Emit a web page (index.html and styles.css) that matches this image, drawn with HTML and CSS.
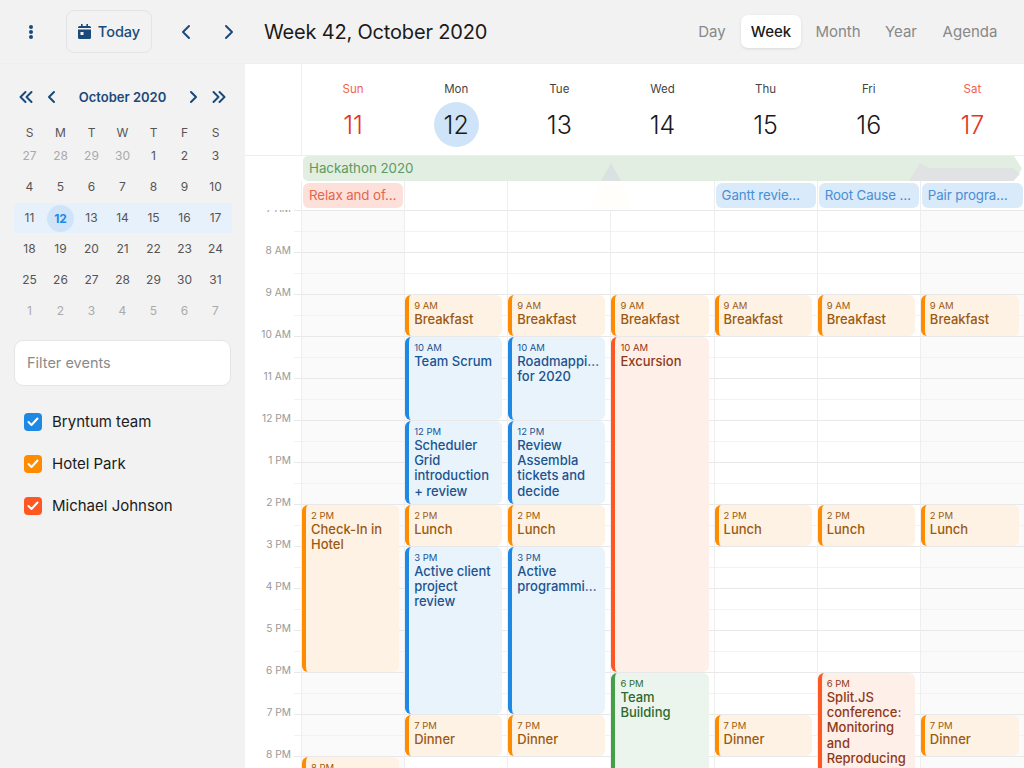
FILE: index.html
```html
<!DOCTYPE html>
<html lang="en">
<head>
<meta charset="utf-8">
<title>Week 42, October 2020</title>
<link rel="stylesheet" href="styles.css">
</head>
<body>
<div class="app">
  <header class="topbar">
    <button class="menu-btn" aria-label="Menu"><svg width="6" height="16" viewBox="0 0 6 16"><circle cx="3" cy="3" r="2"/><circle cx="3" cy="8" r="2"/><circle cx="3" cy="13" r="2"/></svg></button>
    <button class="today-btn"><svg width="13" height="15" viewBox="0 0 13 15"><path d="M3 0h1.6v2h3.8V0H10v2h1.5A1.5 1.5 0 0 1 13 3.500V4H0v-.5A1.500 1.500 0 0 1 1.500 2H3zM0 5.500h13v8A1.500 1.500 0 0 1 11.500 15h-10A1.500 1.500 0 0 1 0 13.500zM2.500 8v3h3V8z"/></svg><span>Today</span></button>
    <button class="arrow-btn" aria-label="Previous"><svg width="10" height="16" viewBox="0 0 10 16"><path d="M8 2L2 8l6 6"/></svg></button>
    <button class="arrow-btn" aria-label="Next"><svg width="10" height="16" viewBox="0 0 10 16"><path d="M2 2l6 6-6 6"/></svg></button>
    <h1 class="title">Week 42, October 2020</h1>
    <nav class="views">
      <span class="view v-day">Day</span>
      <span class="view v-week active">Week</span>
      <span class="view v-month">Month</span>
      <span class="view v-year">Year</span>
      <span class="view v-agenda">Agenda</span>
    </nav>
  </header>
  <div class="main">
    <aside class="sidebar">
      <div class="mini-nav">
        <svg class="mini-ico" width="14" height="14" viewBox="0 0 14 14"><path d="M6.500 2L1.500 7l5 5M12.500 2l-5 5 5 5"/></svg>
        <svg class="mini-ico gap-r" width="14" height="14" viewBox="0 0 14 14"><path d="M10 2L5 7l5 5"/></svg>
        <span class="mini-title">October 2020</span>
        <svg class="mini-ico gap-l" width="14" height="14" viewBox="0 0 14 14"><path d="M4 2l5 5-5 5"/></svg>
        <svg class="mini-ico" width="14" height="14" viewBox="0 0 14 14"><path d="M1.500 2l5 5-5 5M7.500 2l5 5-5 5"/></svg>
      </div>
      <div class="mini-head"><span>S</span><span>M</span><span>T</span><span>W</span><span>T</span><span>F</span><span>S</span></div>
      <div class="mini-week"><span class="off">27</span><span class="off">28</span><span class="off">29</span><span class="off">30</span><span>1</span><span>2</span><span>3</span></div>
      <div class="mini-week"><span>4</span><span>5</span><span>6</span><span>7</span><span>8</span><span>9</span><span>10</span></div>
      <div class="mini-week current"><span>11</span><span class="today"><b>12</b></span><span>13</span><span>14</span><span>15</span><span>16</span><span>17</span></div>
      <div class="mini-week"><span>18</span><span>19</span><span>20</span><span>21</span><span>22</span><span>23</span><span>24</span></div>
      <div class="mini-week"><span>25</span><span>26</span><span>27</span><span>28</span><span>29</span><span>30</span><span>31</span></div>
      <div class="mini-week"><span class="off">1</span><span class="off">2</span><span class="off">3</span><span class="off">4</span><span class="off">5</span><span class="off">6</span><span class="off">7</span></div>
      <div class="filter">Filter events</div>
      <ul class="resources">
        <li><i class="check blue"><svg width="12" height="10" viewBox="0 0 12 10"><path d="M1.500 5l3 3 6-6.500"/></svg></i>Bryntum team</li>
        <li><i class="check orange"><svg width="12" height="10" viewBox="0 0 12 10"><path d="M1.500 5l3 3 6-6.500"/></svg></i>Hotel Park</li>
        <li><i class="check red"><svg width="12" height="10" viewBox="0 0 12 10"><path d="M1.500 5l3 3 6-6.500"/></svg></i>Michael Johnson</li>
      </ul>
    </aside>
    <section class="calendar">
      <div class="days cols">
        <div class="corner"></div>
        <div class="day weekend"><span class="dname">Sun</span><span class="dnum">11</span></div>
        <div class="day"><span class="dname">Mon</span><span class="dnum now">12</span></div>
        <div class="day"><span class="dname">Tue</span><span class="dnum">13</span></div>
        <div class="day"><span class="dname">Wed</span><span class="dnum">14</span></div>
        <div class="day"><span class="dname">Thu</span><span class="dnum">15</span></div>
        <div class="day"><span class="dname">Fri</span><span class="dnum">16</span></div>
        <div class="day weekend"><span class="dname">Sat</span><span class="dnum">17</span></div>
      </div>
      <div class="allday cols">
        <div class="band"><span>Hackathon 2020</span></div>
        <div class="aspacer"></div>
        <div class="acell"><div class="chip chip-red">Relax and of…</div></div>
        <div class="acell"></div>
        <div class="acell"></div>
        <div class="acell"></div>
        <div class="acell"><div class="chip chip-blue">Gantt revie…</div></div>
        <div class="acell"><div class="chip chip-blue">Root Cause …</div></div>
        <div class="acell"><div class="chip chip-blue">Pair progra…</div></div>
        <svg class="ghost ghost-a" width="44" height="47" viewBox="0 0 44 47" aria-hidden="true"><path d="M2 47L12 18h20l10 29z" fill="#fffefa"/><path d="M12 18L22 0l10 18z" fill="#d8dde3" opacity=".8"/></svg>
        <svg class="ghost ghost-b" width="111" height="18" viewBox="0 0 111 18" aria-hidden="true"><path d="M0 18L11 0l9 5h84l7 6-7 7z" fill="#e0e2e3"/></svg>
      </div>
      <div class="scroller cols">
        <div class="axis">
          <div class="labels">
            <span>7 AM</span><span>8 AM</span><span>9 AM</span><span>10 AM</span><span>11 AM</span><span>12 PM</span><span>1 PM</span><span>2 PM</span><span>3 PM</span><span>4 PM</span><span>5 PM</span><span>6 PM</span><span>7 PM</span><span>8 PM</span>
          </div>
        </div>
        <div class="col shade">
          <article class="ev orange at14 len4"><small>2 PM</small><p>Check-In in Hotel</p></article>
          <article class="ev orange at20 len1"><small>8 PM</small><p>Dinner</p></article>
        </div>
        <div class="col">
          <article class="ev orange at9 len1"><small>9 AM</small><p>Breakfast</p></article>
          <article class="ev blue at10 len2"><small>10 AM</small><p>Team Scrum</p></article>
          <article class="ev blue at12 len2"><small>12 PM</small><p>Scheduler Grid introduction + review</p></article>
          <article class="ev orange at14 len1"><small>2 PM</small><p>Lunch</p></article>
          <article class="ev blue at15 len4"><small>3 PM</small><p>Active client project review</p></article>
          <article class="ev orange at19 len1"><small>7 PM</small><p>Dinner</p></article>
        </div>
        <div class="col">
          <article class="ev orange at9 len1"><small>9 AM</small><p>Breakfast</p></article>
          <article class="ev blue at10 len2"><small>10 AM</small><p>Roadmappi…<br>for 2020</p></article>
          <article class="ev blue at12 len2"><small>12 PM</small><p>Review Assembla tickets and decide</p></article>
          <article class="ev orange at14 len1"><small>2 PM</small><p>Lunch</p></article>
          <article class="ev blue at15 len4"><small>3 PM</small><p>Active<br>programmi…</p></article>
          <article class="ev orange at19 len1"><small>7 PM</small><p>Dinner</p></article>
        </div>
        <div class="col">
          <article class="ev orange at9 len1"><small>9 AM</small><p>Breakfast</p></article>
          <article class="ev red at10 len8"><small>10 AM</small><p>Excursion</p></article>
          <article class="ev green at18 len4"><small>6 PM</small><p>Team Building</p></article>
        </div>
        <div class="col">
          <article class="ev orange at9 len1"><small>9 AM</small><p>Breakfast</p></article>
          <article class="ev orange at14 len1"><small>2 PM</small><p>Lunch</p></article>
          <article class="ev orange at19 len1"><small>7 PM</small><p>Dinner</p></article>
        </div>
        <div class="col">
          <article class="ev orange at9 len1"><small>9 AM</small><p>Breakfast</p></article>
          <article class="ev orange at14 len1"><small>2 PM</small><p>Lunch</p></article>
          <article class="ev red at18 len4"><small>6 PM</small><p>Split.JS conference: Monitoring and Reproducing</p></article>
        </div>
        <div class="col shade">
          <article class="ev orange at9 len1"><small>9 AM</small><p>Breakfast</p></article>
          <article class="ev orange at14 len1"><small>2 PM</small><p>Lunch</p></article>
          <article class="ev orange at19 len1"><small>7 PM</small><p>Dinner</p></article>
        </div>
      </div>
    </section>
  </div>
</div>
</body>
</html>
```
FILE: styles.css
```css
* { box-sizing: border-box; }
html, body { margin: 0; height: 100%; }
body { font-family: "Inter", "Noto Sans", "Liberation Sans", sans-serif; color: #1a1a1a; background: #f2f2f2; overflow: hidden; }
button { font: inherit; background: none; border: 0; padding: 0; color: inherit; }
.app { width: 1024px; height: 768px; display: flex; flex-direction: column; overflow: hidden; }

/* top bar */
.topbar { height: 64px; flex: none; display: flex; align-items: center; background: #f2f2f2; border-bottom: 1px solid #eeeeee; }
.menu-btn { width: 6px; height: 16px; margin-left: 28px; display: flex; }
.menu-btn svg { fill: #1a4a7a; }
.today-btn { margin-left: 32px; width: 86px; height: 43px; display: flex; align-items: center; justify-content: center; gap: 7px; border: 1px solid #e2e5e8; border-radius: 8px; color: #1a4a7a; font-size: 14.5px; font-weight: 500; }
.today-btn svg { fill: #1a4a7a; flex: none; }
.arrow-btn { width: 10px; height: 16px; display: flex; margin-left: 33px; }
.today-btn + .arrow-btn { margin-left: 29px; }
.arrow-btn svg, .mini-ico { fill: none; stroke: #1a4a7a; stroke-width: 2; stroke-linecap: round; stroke-linejoin: round; flex: none; }
.title { margin: 0 0 0 30px; font-size: 20px; font-weight: 400; line-height: 24px; letter-spacing: -.18px; white-space: nowrap; }
.views { margin-left: auto; display: flex; align-items: center; font-size: 15px; color: #888888; padding-right: 11px; }
.view { display: block; text-align: center; height: 33px; line-height: 33px; border-radius: 7px; }
.v-day { width: 58px; }
.v-week { width: 60px; }
.v-month { width: 74px; }
.v-year { width: 52px; }
.v-agenda { width: 86px; }
.view.active { background: #ffffff; color: #1a1a1a; font-weight: 500; box-shadow: 0 1px 3px rgba(0,0,0,.1); }

.main { flex: 1; min-height: 0; display: flex; }

/* sidebar */
.sidebar { width: 245px; flex: none; padding: 21px 13px 0 14px; background: #f2f2f2; }
.mini-nav { height: 24px; display: flex; align-items: center; padding: 0 6px 0 5px; gap: 11px; }
.mini-title { flex: 1; text-align: center; font-size: 13px; font-weight: 600; color: #1a4a7a; white-space: nowrap; }
.mini-head, .mini-week { display: grid; grid-template-columns: repeat(7, 31px); text-align: center; font-size: 12px; color: #555555; }
.mini-head { margin-top: 16px; height: 16px; line-height: 16px; }
.mini-week { height: 31px; line-height: 30px; }
.mini-week .off { color: #aaaaaa; }
.mini-week.current { background: #e6f1fb; height: 30px; margin-bottom: 1px; }
.today { display: flex; justify-content: center; align-items: center; }
.today b { width: 27px; height: 27px; line-height: 27px; border-radius: 50%; background: #cfe4f8; color: #1e88e5; font-weight: 700; }
.filter { margin-top: 13px; height: 46px; width: 217px; line-height: 44px; padding-left: 12px; background: #ffffff; border: 1px solid #e5e5e5; border-radius: 9px; font-size: 14.5px; color: #8a8a8a; }
.resources { list-style: none; margin: 15px 0 0; padding: 0 0 0 10px; }
.resources li { height: 42px; display: flex; align-items: center; gap: 10px; font-size: 15px; line-height: 20px; color: #1a1a1a; }
.check { width: 18px; height: 18px; border-radius: 4px; display: flex; align-items: center; justify-content: center; flex: none; }
.check svg { fill: none; stroke: #ffffff; stroke-width: 2; stroke-linecap: round; stroke-linejoin: round; }
.check.blue { background: #1e88e5; }
.check.orange { background: #ff8c00; }
.check.red { background: #ff5722; }

/* calendar */
.calendar { flex: 1; min-width: 0; background: #ffffff; display: flex; flex-direction: column; }
.cols { display: grid; grid-template-columns: 56px repeat(6, 103.15px) 1fr; }
.days { height: 92px; flex: none; border-bottom: 1px solid #eeeeee; }
.corner { border-right: 1px solid #eeeeee; margin-right: -1px; }
.day { display: flex; flex-direction: column; align-items: center; padding: 17px 0 0 1px; }
.dname { font-size: 11.5px; line-height: 16px; color: #444444; }
.dnum { margin-top: 5px; width: 45px; height: 45px; line-height: 46px; border-radius: 50%; text-align: center; font-size: 25px; font-weight: 300; }
.dnum.now { background: #cfe4f8; }
.weekend .dname { color: #f4604a; }
.weekend .dnum { color: #e53424; }

.allday { position: relative; height: 54px; flex: none; grid-template-rows: 25px 29px; }
.band { grid-column: 2 / 9; height: 25px; margin: 0 2px; padding-left: 6px; background: #e1eee1; color: #5c9a5f; font-size: 13.3px; line-height: 25px; clip-path: polygon(0 0, calc(100% - 8px) 0, 100% 50%, calc(100% - 8px) 100%, 0 100%); border-radius: 5px 0 0 5px; }
.acell { border-left: 1px solid #eeeeee; padding: 2px 1px; }
.chip { height: 25px; line-height: 25px; padding-left: 6px; border-radius: 6px; font-size: 13.3px; letter-spacing: -.1px; white-space: nowrap; overflow: hidden; }
.chip-red { background: #fde0da; color: #e5654a; }
.chip-blue { background: #d9eafa; color: #4a8ed3; }
.ghost { position: absolute; pointer-events: none; }
.ghost-a { left: 344px; top: 7px; }
.ghost-b { left: 664px; top: 7px; }

.scroller { flex: 1; min-height: 0; overflow: hidden; }
.axis { height: 558px; background: linear-gradient(#e8e8e8 0 1px, transparent 1px 21px, #f2f2f2 21px 22px, transparent 22px) right top / 7px 42px repeat-y; overflow: hidden; }
.labels { display: flex; flex-direction: column; margin-top: -11px; padding-right: 10px; text-align: right; font-size: 10.2px; color: #999999; }
.labels span { height: 42px; line-height: 18px; }
.col { height: 558px; border-left: 1px solid #eeeeee; display: grid; grid-template-rows: repeat(34, 21px); overflow: hidden; background: repeating-linear-gradient(#e8e8e8 0 1px, transparent 1px 21px, #f2f2f2 21px 22px, transparent 22px 42px); }
.col.shade { background: repeating-linear-gradient(#e8e8e8 0 1px, #fafafa 1px 21px, #f2f2f2 21px 22px, #fafafa 22px 42px); }

.ev { grid-column: 1; margin: 1px 5px 0 0; min-height: 0; padding: 5px 5px 0 5px; border-left: 4px solid; border-radius: 6px; overflow: hidden; }
.ev small { display: block; font-size: 9.500px; line-height: 12px; }
.ev p { margin: 0; font-size: 13px; line-height: 15.200px; font-weight: 500; }
.ev.orange { background: #fef2e5; border-color: #ff8c00; color: #9c5a10; }
.ev.blue { background: #e8f3fc; border-color: #1e88e5; color: #1c5490; }
.ev.red { background: #ffefe9; border-color: #ff5722; color: #8f3a17; }
.ev.green { background: #ecf5ed; border-color: #43a047; color: #2a6b30; }

.at9 { grid-row-start: 5; }
.at10 { grid-row-start: 7; }
.at12 { grid-row-start: 11; }
.at14 { grid-row-start: 15; }
.at15 { grid-row-start: 17; }
.at18 { grid-row-start: 23; }
.at19 { grid-row-start: 25; }
.at20 { grid-row-start: 27; }
.len1 { grid-row-end: span 2; }
.len2 { grid-row-end: span 4; }
.len4 { grid-row-end: span 8; }
.len8 { grid-row-end: span 16; }
```
